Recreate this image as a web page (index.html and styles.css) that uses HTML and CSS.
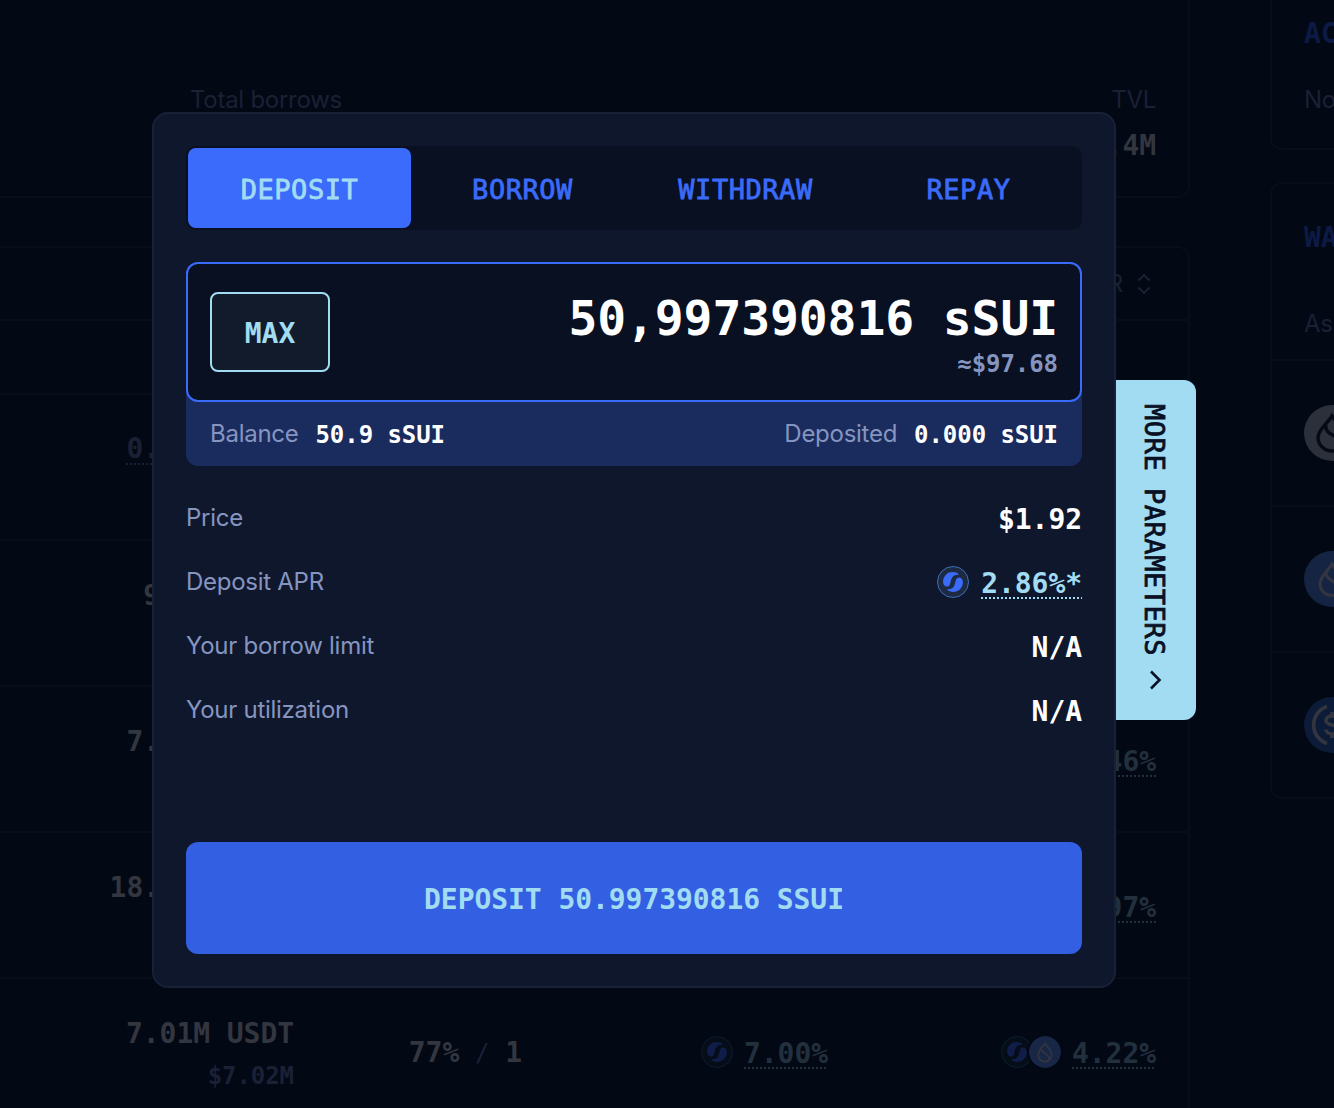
FILE: index.html
```html
<!DOCTYPE html>
<html lang="en">
<head>
  <meta charset="UTF-8" />
  <meta name="viewport" content="width=device-width, initial-scale=1.0" />
  <title>Deposit sSUI</title>
  <link rel="stylesheet" href="styles.css">
</head>
<body>
  <svg class="defs" width="0" height="0">
    <symbol id="logo" viewBox="0 0 32 32">
      <path d="M22 8.200C18.500 5.300 12.600 5.400 9.200 8.500C5.400 12 5.200 17.600 8 19.900C10 21.300 12.300 20.500 13.100 17.900C13.900 15 14.100 11.700 16.700 9.800C18.400 8.700 20.400 9.300 22 8.200Z"/>
      <path d="M10 23.800C13.500 26.700 19.400 26.600 22.800 23.500C26.600 20 26.800 14.400 24 12.100C22 10.700 19.700 11.500 18.900 14.100C18.100 17 17.900 20.300 15.300 22.200C13.600 23.300 11.600 22.700 10 23.800Z"/>
    </symbol>
    <symbol id="drop" viewBox="0 0 32 32">
      <path d="M16 7.500C13.500 11 9.200 14.600 9.200 18.800A6.800 6.800 0 0 0 22.800 18.800C22.800 14.600 18.500 11 16 7.500Z"/>
      <path d="M12.700 13.200C12.500 18 20.800 17.500 20.200 23.500"/>
    </symbol>
  </svg>

  <div class="page">
    <main class="main">
      <section class="stats">
        <div class="stat left">
          <span class="label">Total borrows</span>
        </div>
        <div class="stat right">
          <span class="label">TVL</span>
          <span class="mono value">.4M</span>
        </div>
      </section>

      <section class="table">
        <div class="thead">
          <span class="label">APR</span>
          <svg class="sort" width="14" height="20" viewBox="0 0 14 20"><path d="M1.500 6.500L7 1L12.500 6.500M1.500 13.500L7 19L12.500 13.500"/></svg>
        </div>
        <div class="group"></div>
        <div class="row">
          <div class="amount cut"><span class="mono value muted dotted">0.</span></div>
        </div>
        <div class="row">
          <div class="amount cut"><span class="mono value">9</span></div>
        </div>
        <div class="row">
          <div class="amount cut"><span class="mono value">7.</span></div>
          <div class="apr last"><span class="mono rate dotted">46%</span></div>
        </div>
        <div class="row">
          <div class="amount cut"><span class="mono value">18.</span></div>
          <div class="apr last"><span class="mono rate dotted">97%</span></div>
        </div>
        <div class="row">
          <div class="amount">
            <span class="mono value">7.01M USDT</span>
            <span class="mono usd">$7.02M</span>
          </div>
          <div class="ltv"><span class="mono value">77%</span><span class="mono slash">/</span><span class="mono value">1</span></div>
          <div class="apr">
            <svg class="coin" viewBox="0 0 32 32"><circle class="ring" cx="16" cy="16" r="15.500"/><use href="#logo"/></svg>
            <span class="mono rate dotted">7.00%</span>
          </div>
          <div class="apr last">
            <div class="pair">
              <svg class="coin" viewBox="0 0 32 32"><circle class="ring" cx="16" cy="16" r="15.500"/><use href="#logo"/></svg>
              <svg class="coin sui" viewBox="0 0 32 32"><circle cx="16" cy="16" r="16"/><use href="#drop"/></svg>
            </div>
            <span class="mono rate dotted">4.22%</span>
          </div>
        </div>
      </section>
    </main>

    <aside class="side">
      <section class="account">
        <h2 class="mono">ACCOUNT</h2>
        <p class="label">No</p>
      </section>
      <section class="wallet">
        <h2 class="mono">WALLET</h2>
        <p class="label">Asset</p>
        <div class="asset">
          <svg class="token grey" viewBox="0 0 56 56"><circle cx="28" cy="28" r="28"/><path d="M28 11C23 19 14 25 14 32.500A14 13.500 0 0 0 42 32.500C42 25 33 19 28 11Z"/><path d="M22 20C20 32 38 28 36.500 42"/></svg>
        </div>
        <div class="asset">
          <svg class="token blue" viewBox="0 0 56 56"><circle cx="28" cy="28" r="28"/><path d="M28 13C24 20 16 25.500 16 32.500A12 12 0 0 0 40 32.500C40 25.500 32 20 28 13Z"/><path d="M22 20C21 32 38 29 36 41"/></svg>
        </div>
        <div class="asset">
          <svg class="token usdc" viewBox="0 0 56 56"><circle cx="28" cy="28" r="28"/><path d="M23 9.500A19.500 19.500 0 0 0 23 46.500M33 9.500A19.500 19.500 0 0 1 33 46.500M28 15V19M28 37V41M34 23.500C34 17.500 22 17.500 22 23.500C22 29.500 34 26.500 34 32.500C34 38.500 22 38.500 22 32.500"/></svg>
        </div>
      </section>
    </aside>
  </div>

  <div class="dialog">
    <div class="tabs">
      <button class="mono tab active">DEPOSIT</button>
      <button class="mono tab">BORROW</button>
      <button class="mono tab">WITHDRAW</button>
      <button class="mono tab">REPAY</button>
    </div>

    <div class="field">
      <div class="input">
        <button class="mono max">MAX</button>
        <div class="entered">
          <span class="mono big">50,997390816 sSUI</span>
          <span class="mono approx">≈$97.68</span>
        </div>
      </div>
      <div class="balances">
        <div class="bal"><span class="label">Balance</span><span class="mono">50.9 sSUI</span></div>
        <div class="bal"><span class="label">Deposited</span><span class="mono">0.000 sSUI</span></div>
      </div>
    </div>

    <div class="info">
      <div class="line"><span class="label">Price</span><span class="mono">$1.92</span></div>
      <div class="line">
        <span class="label">Deposit APR</span>
        <span class="reward">
          <svg class="coin" viewBox="0 0 32 32"><circle class="ring" cx="16" cy="16" r="15.500"/><use href="#logo"/></svg>
          <span class="mono rate dotted">2.86%*</span>
        </span>
      </div>
      <div class="line"><span class="label">Your borrow limit</span><span class="mono">N/A</span></div>
      <div class="line"><span class="label">Your utilization</span><span class="mono">N/A</span></div>
    </div>

    <button class="mono submit">DEPOSIT 50.997390816 SSUI</button>

    <button class="mono more">
      <span>MORE PARAMETERS</span>
      <svg width="14" height="20" viewBox="0 0 14 20"><path d="M2 1.500L10.500 10L2 18.500"/></svg>
    </button>
  </div>
</body>
</html>
```
FILE: styles.css
```css
* {
  margin: 0;
  padding: 0;
  box-sizing: border-box;
}

body {
  width: 1334px;
  height: 1108px;
  overflow: hidden;
  position: relative;
  background: #020814;
  color: #fff;
  font-family: Inter, "Liberation Sans", sans-serif;
  font-size: 24px;
}

button {
  border: none;
  background: none;
}

.defs {
  display: block;
  height: 0;
}

.mono {
  font-family: "DejaVu Sans Mono", "Liberation Mono", monospace;
  font-size: 28px;
  font-weight: bold;
  line-height: 40px;
  letter-spacing: -0.06px;
  white-space: pre;
}

.label {
  font-size: 24px;
  line-height: 32px;
  letter-spacing: -0.27px;
  white-space: nowrap;
}

.dotted {
  background: repeating-linear-gradient(90deg, currentColor 0 2px, transparent 2px 4px) left bottom / 100% 2px no-repeat;
}

/* page behind the dialog */
.page {
  display: flex;
  gap: 80px;
  width: 1334px;
  height: 1108px;
  overflow: hidden;
}

.page .label {
  color: #1b2034;
}

.main {
  flex: none;
  width: 1190px;
}

.stats {
  display: flex;
  justify-content: space-between;
  height: 198px;
  padding: 84px 32px 0 190px;
  border-right: 2px solid #060d1b;
  border-bottom: 2px solid #060d1b;
  border-bottom-right-radius: 12px;
}

.stat {
  display: flex;
  flex-direction: column;
}

.stat.right {
  align-items: flex-end;
}

.stat .value {
  margin-top: 10px;
}

.value {
  color: #33363f;
}

.table {
  margin-top: 48px;
  height: 900px;
  border-top: 2px solid #060d1b;
  border-right: 2px solid #060d1b;
  border-top-right-radius: 12px;
}

.thead {
  display: flex;
  justify-content: flex-end;
  align-items: center;
  gap: 14px;
  height: 73px;
  padding-right: 37px;
  border-bottom: 2px solid #060d1b;
}

.sort {
  fill: none;
  stroke: #1b2034;
  stroke-width: 2;
}

.group {
  height: 74px;
  border-bottom: 2px solid #060d1b;
}

.row {
  display: grid;
  grid-template-columns: 294px 228px 306px 328px;
  height: 146px;
  border-bottom: 2px solid #060d1b;
}

.row > div {
  display: flex;
}

.row .amount {
  flex-direction: column;
  align-items: flex-end;
  padding-top: 35px;
}

.row .cut {
  padding-right: 134px;
}

.muted {
  color: #1b2034;
}

.amount .dotted {
  padding-top: 2px;
  line-height: 33px;
}

.row .usd {
  margin-top: 2px;
  font-size: 24px;
  color: #1b2034;
}

.row .ltv {
  align-items: center;
  justify-content: flex-end;
  padding-top: 3px;
}

.slash {
  width: 46px;
  text-align: center;
  font-size: 24px;
  font-weight: normal;
  color: #1b2034;
}

.row .apr {
  align-items: center;
  justify-content: flex-end;
  gap: 11px;
  padding-top: 1px;
}

.row .last {
  grid-column: 4;
}

.rate {
  padding-top: 3px;
  line-height: 31px;
}

.page .rate {
  color: #22303e;
}

.coin {
  width: 32px;
  height: 32px;
  fill: #3a6bfa;
}

.ring {
  fill: #1c2b42;
  stroke: #3f6cb8;
}

.page .coin {
  fill: #101d49;
}

.page .ring {
  fill: #050d18;
  stroke: #0f1c31;
}

.pair {
  display: flex;
}

.page .sui {
  margin-left: -4px;
  border-radius: 50%;
  box-shadow: 0 0 0 2px #020814;
  fill: #182746;
}

.sui use {
  fill: none;
  stroke: #33363f;
  stroke-width: 1.6;
}

.side {
  flex: none;
  width: 400px;
}

.side h2 {
  color: #0c1a45;
}

.account,
.wallet {
  border: 2px solid #060d1b;
  border-radius: 12px;
}

.account {
  height: 151px;
  margin-top: -1px;
  padding: 15px 32px;
  border-top: none;
  border-radius: 0 0 12px 12px;
}

.account .label {
  margin-top: 30px;
}

.wallet {
  height: 617px;
  margin-top: 32px;
}

.wallet h2 {
  padding: 34px 32px 0;
}

.wallet .label {
  height: 103px;
  padding: 50px 32px 0;
  border-bottom: 2px solid #060d1b;
}

.asset {
  display: flex;
  align-items: center;
  height: 146px;
  padding-left: 32px;
  border-bottom: 2px solid #060d1b;
}

.asset:last-child {
  height: 144px;
  border-bottom: none;
}

.token {
  width: 56px;
  height: 56px;
}

.token path {
  fill: none;
  stroke: #33363f;
  stroke-width: 3;
}

.grey circle { fill: #2c303b; }
.grey path { stroke: #050a16; stroke-width: 3.4; }
.blue circle { fill: #162443; }
.usdc circle { fill: #0b1b38; }
.usdc path { stroke-width: 3.6; }

/* dialog */
.dialog {
  position: absolute;
  left: 152px;
  top: 112px;
  display: flex;
  flex-direction: column;
  width: 964px;
  height: 876px;
  padding: 32px;
  background: #0f172d;
  border: 2px solid #192136;
  border-radius: 16px;
}

.dialog .label {
  color: #8595c0;
}

.tabs {
  display: flex;
  height: 84px;
  padding: 2px;
  background: #091022;
  border-radius: 10px;
}

.tab {
  flex: 1;
  padding-top: 4px;
  color: #3a6bfa;
  border-radius: 8px;
}

.tab.active {
  background: #3a6bfa;
  color: #a1dcf2;
}

.tab,
.more {
  font-weight: normal;
  font-size: 27px;
  letter-spacing: 0.54px;
  -webkit-text-stroke: 0.8px currentColor;
}

.field {
  margin-top: 32px;
  background: #1a2b5e;
  border-radius: 12px;
}

.input {
  display: flex;
  justify-content: space-between;
  align-items: center;
  height: 140px;
  padding: 0 22px;
  background: #091022;
  border: 2px solid #3a6bfa;
  border-radius: 12px;
}

.max {
  width: 120px;
  height: 80px;
  padding-top: 4px;
  color: #a1dcf2;
  background: #111b2c;
  border: 2px solid #a1dcf2;
  border-radius: 8px;
}

.entered {
  display: flex;
  flex-direction: column;
  align-items: flex-end;
  padding-top: 9px;
}

.big {
  font-size: 48px;
  line-height: 56px;
  letter-spacing: -0.1px;
}

.approx {
  font-size: 24px;
  line-height: 37px;
  color: #8595c0;
}

.balances {
  display: flex;
  justify-content: space-between;
  align-items: center;
  height: 64px;
  padding: 0 24px;
}

.bal {
  display: flex;
  align-items: center;
  gap: 17px;
}

.bal .mono {
  padding-top: 2px;
  font-size: 24px;
}

.info {
  margin-top: 20px;
}

.line {
  display: flex;
  justify-content: space-between;
  align-items: center;
  height: 64px;
}

.line > .mono {
  padding-top: 4px;
}

.reward {
  display: flex;
  align-items: center;
  gap: 12px;
}

.reward .rate {
  color: #a1dcf2;
}

.submit {
  height: 112px;
  margin-top: auto;
  padding-top: 4px;
  background: #3360e2;
  color: #a1dcf2;
  border-radius: 12px;
}

.more {
  position: absolute;
  left: 962px;
  top: 266px;
  display: flex;
  align-items: center;
  justify-content: center;
  gap: 14px;
  width: 80px;
  height: 340px;
  padding-bottom: 6px;
  writing-mode: vertical-rl;
  background: #a1dcf2;
  color: #0a1024;
  border-radius: 0 12px 12px 0;
}

.more span {
  padding-right: 4px;
}

.more svg {
  fill: none;
  stroke: #0a1024;
  stroke-width: 2.6;
}
```
